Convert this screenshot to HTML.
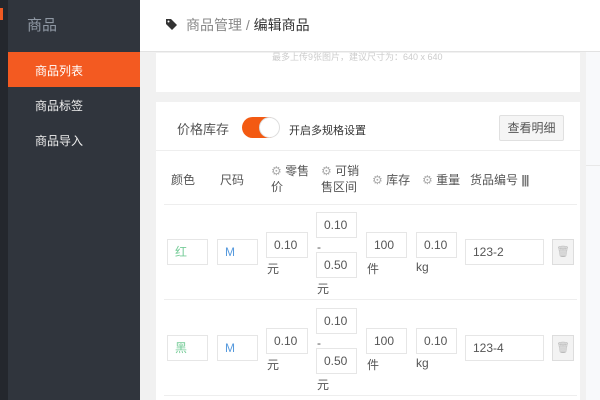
<!DOCTYPE html><html><head><meta charset="utf-8"><style>
*{margin:0;padding:0;box-sizing:border-box}
body{width:600px;height:400px;overflow:hidden;position:relative;background:#f1f1f1;font-family:"Liberation Sans","Noto Sans CJK SC",sans-serif;color:#333}
.a{position:absolute}
.in{position:absolute;border:1px solid #e6e6e6;background:#fff;font-size:12px;padding-left:7px;line-height:24px;height:26px;color:#555}
.t{position:absolute;font-size:12px;color:#555}
.g{color:#aaa}
</style></head><body>
<div class="a" style="left:0;top:0;width:8px;height:400px;background:#24272d"></div>
<div class="a" style="left:0;top:8px;width:3px;height:12px;background:#f05a22"></div>
<div class="a" style="left:8px;top:0;width:132px;height:400px;background:#30353d"></div>
<div class="a" style="left:27px;top:14px;font-size:15px;color:#8f98a4">商品</div>
<div class="a" style="left:8px;top:52px;width:132px;height:35px;background:#f35a21"></div>
<div class="a" style="left:35px;top:62px;font-size:12px;color:#fff">商品列表</div>
<div class="a" style="left:35px;top:97px;font-size:12px;color:#eee">商品标签</div>
<div class="a" style="left:35px;top:132px;font-size:12px;color:#eee">商品导入</div>
<div class="a" style="left:140px;top:0;width:460px;height:52px;background:#fff;border-bottom:1px solid #e2e2e2"></div>
<svg class="a" style="left:165px;top:18px" width="13" height="13" viewBox="0 0 13 13"><path d="M1 1h5l6 6-5 5-6-6z" fill="#333"/><circle cx="3.5" cy="3.5" r="1" fill="#fff"/></svg>
<div class="a" style="left:186px;top:15px;font-size:14px;color:#888">商品管理 <span style="color:#888">/</span> <span style="color:#333">编辑商品</span></div>
<div class="a" style="left:156px;top:53px;width:424px;height:39px;background:#fff"></div>
<div class="a" style="left:272px;top:50px;font-size:9px;color:#ccc">最多上传9张图片，建议尺寸为：640 x 640</div>
<div class="a" style="left:586px;top:52px;width:14px;height:348px;background:#f8f9fb"></div>
<div class="a" style="left:586px;top:165px;width:14px;height:1px;background:#e8e8e8"></div>
<div class="a" style="left:156px;top:102px;width:424px;height:298px;background:#fff"></div>
<div class="a" style="left:177px;top:119px;font-size:13px;color:#555">价格库存</div>
<div class="a" style="left:242px;top:117px;width:37px;height:21px;border-radius:11px;background:#f35a12"></div>
<div class="a" style="left:259px;top:117px;width:21px;height:21px;border-radius:50%;background:#fff;border:1px solid #ddd"></div>
<div class="a" style="left:289px;top:122px;font-size:11px;color:#333">开启多规格设置</div>
<div class="a" style="left:499px;top:115px;width:65px;height:26px;border:1px solid #e0e0e0;border-radius:2px;background:#f5f5f5;font-size:12px;color:#555;text-align:center;line-height:24px">查看明细</div>
<div class="a" style="left:156px;top:150px;width:424px;height:1px;background:#eee"></div>
<div class="t" style="left:171px;top:171px">颜色</div>
<div class="t" style="left:220px;top:171px">尺码</div>
<div class="t" style="left:271px;top:163px;line-height:16px"><span class="g">⚙</span> 零售<br>价</div>
<div class="t" style="left:321px;top:163px;line-height:16px"><span class="g">⚙</span> 可销<br>售区间</div>
<div class="t" style="left:372px;top:171px"><span class="g">⚙</span> 库存</div>
<div class="t" style="left:422px;top:171px"><span class="g">⚙</span> 重量</div>
<div class="t" style="left:470px;top:171px">货品编号 <b style="letter-spacing:-1px;color:#777">|||</b></div>
<div class="a" style="left:164px;top:204px;width:413px;height:1px;background:#eee"></div>
<div class="a" style="left:164px;top:299px;width:413px;height:1px;background:#eee"></div>
<div class="a" style="left:164px;top:395px;width:413px;height:1px;background:#eee"></div>

<div class="a" style="left:0;top:0">
<div class="in" style="left:167px;top:239px;width:41px;color:#7c9">红</div>
<div class="in" style="left:217px;top:239px;width:41px;color:#59d">M</div>
<div class="in" style="left:266px;top:232px;width:42px">0.10</div><div class="t" style="left:267px;top:260px">元</div>
<div class="in" style="left:316px;top:212px;width:41px">0.10</div><div class="t" style="left:317px;top:240px">-</div>
<div class="in" style="left:316px;top:252px;width:41px">0.50</div><div class="t" style="left:317px;top:280px">元</div>
<div class="in" style="left:366px;top:232px;width:41px">100</div><div class="t" style="left:367px;top:260px">件</div>
<div class="in" style="left:416px;top:232px;width:41px">0.10</div><div class="t" style="left:416px;top:260px">kg</div>
<div class="in" style="left:465px;top:239px;width:79px">123-2</div>
<div class="a" style="left:552px;top:239px;width:22px;height:26px;border:1px solid #ddd;background:#f3f3f3;color:#bbb;font-size:11px;text-align:center;line-height:24px">🗑</div>
</div>
<div class="a" style="left:0;top:96px;width:600px">
<div class="in" style="left:167px;top:239px;width:41px;color:#7c9">黑</div>
<div class="in" style="left:217px;top:239px;width:41px;color:#59d">M</div>
<div class="in" style="left:266px;top:232px;width:42px">0.10</div><div class="t" style="left:267px;top:260px">元</div>
<div class="in" style="left:316px;top:212px;width:41px">0.10</div><div class="t" style="left:317px;top:240px">-</div>
<div class="in" style="left:316px;top:252px;width:41px">0.50</div><div class="t" style="left:317px;top:280px">元</div>
<div class="in" style="left:366px;top:232px;width:41px">100</div><div class="t" style="left:367px;top:260px">件</div>
<div class="in" style="left:416px;top:232px;width:41px">0.10</div><div class="t" style="left:416px;top:260px">kg</div>
<div class="in" style="left:465px;top:239px;width:79px">123-4</div>
<div class="a" style="left:552px;top:239px;width:22px;height:26px;border:1px solid #ddd;background:#f3f3f3;color:#bbb;font-size:11px;text-align:center;line-height:24px">🗑</div>
</div>
</body></html>
